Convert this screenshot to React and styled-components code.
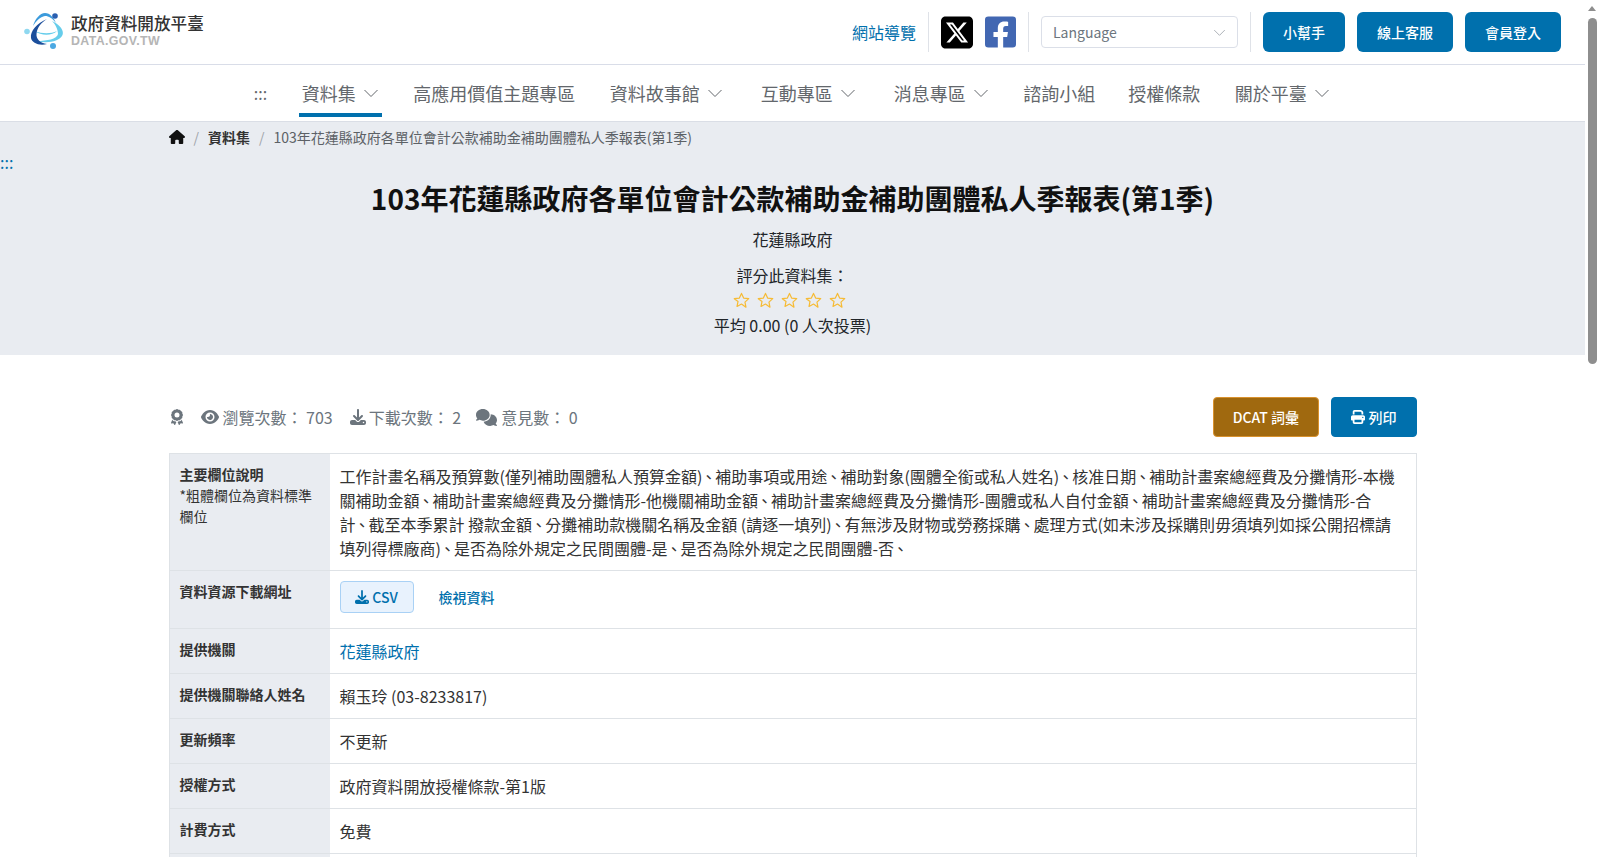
import React from "react";
import styled, { createGlobalStyle } from "styled-components";
import { FaFacebookSquare } from "react-icons/fa";
import { FaAward, FaEye, FaDownload, FaComments, FaPrint, FaHouse, FaSquareXTwitter } from "react-icons/fa6";

const Global = createGlobalStyle`
  html, body { margin: 0; padding: 0; background: #fff; }
  body { font-family: "Noto Sans CJK TC", "Noto Sans", sans-serif; font-size: 16px; line-height: 24px; color: #212529; }
  * { box-sizing: border-box; }
`;
const blue = "#0070ad";
const Page = styled.div`padding-right: 15px;`;
const ScrollTrack = styled.div`position: fixed; top: 0; right: 0; bottom: 0; width: 15px; background: #fff;`;
const ScrollArrow = styled.div`
  position: absolute; left: 3px; top: 6px; width: 0; height: 0;
  border-left: 4.5px solid transparent; border-right: 4.5px solid transparent; border-bottom: 5px solid #8e8e8e;
`;
const ScrollThumb = styled.div`position: absolute; left: 3px; top: 18px; width: 9px; height: 346px; border-radius: 5px; background: #8e8e8e;`;
const Header = styled.header`
  height: 65px; display: flex; align-items: center; justify-content: space-between;
  padding: 0 24px; border-bottom: 1px solid #d9dde8;
`;
const Logo = styled.div`display: flex; align-items: center; gap: 7px;`;
const LogoText = styled.div`display: flex; flex-direction: column; margin-top: -3px;`;
const LogoTitle = styled.span`font-size: 16.6px; line-height: 20px; font-weight: 500; color: #333;`;
const LogoSub = styled.span`font-family: "Liberation Sans", sans-serif; font-size: 12.4px; line-height: 14px; font-weight: 700; letter-spacing: 0.35px; color: #b5b5b5; margin-top: 1px;`;
const Tools = styled.div`display: flex; align-items: center; gap: 12px;`;
const SiteMap = styled.a`color: ${blue}; font-size: 16px;`;
const Sep = styled.span`width: 1px; height: 40px; background: #dfe2e8;`;
const Social = styled.span`display: flex; font-size: ${p => p.$size}px; color: ${p => p.$color}; width: ${p => p.$w}px; justify-content: center; align-items: center; height: 32px;`;
const LangSelect = styled.div`
  width: 197px; height: 32px; border: 1px solid #dbdfe8; border-radius: 4px; padding: 0 11px;
  display: flex; align-items: center; justify-content: space-between; font-size: 14px; color: #6c757d;
`;
const HeadBtn = styled.button`
  height: 40px; padding: 0 20px; background: ${blue}; border: 0; border-radius: 6px; color: #fff;
  font: 500 14px "Noto Sans CJK TC", sans-serif;
`;
const Nav = styled.nav`
  height: 57px; display: flex; justify-content: center; gap: 25px; border-bottom: 1px solid #dadee6; padding-left: 2px;
`;
const NavItem = styled.a`
  display: flex; align-items: center; gap: 7px; padding: 0 3px; height: 56px; position: relative;
  font-size: ${p => p.$small ? 16 : 18}px; color: #63676c;
  margin: 0 ${p => p.$drop ? 3.5 : 0}px 0 ${p => p.$drop ? 3.5 : p.$ml || 0}px;
  ${p => p.$active && `&::after { content: ""; position: absolute; left: 0; right: 0; bottom: 4px; height: 4px; background: ${blue}; }`}
`;
const Band = styled.section`background: #e9ecf1; height: 233px; position: relative;`;
const Container = styled.div`width: 1248px; margin: 0 auto;`;
const Crumbs = styled.div`display: flex; align-items: center; height: 30px; font-size: 14px; color: #5c6166;`;
const HomeIcon = styled.span`display: flex; color: #111; font-size: 16px;`;
const Slash = styled.span`color: #a0a4aa; margin: 0 9px;`;
const CrumbBold = styled.b`font-weight: 700; color: #333;`;
const Anchor = styled.a`position: absolute; left: 0; top: 28px; color: ${blue}; font-size: 16px; line-height: 24px;`;
const Title = styled.h1`margin: 0; padding-top: 25px; text-align: center; font-size: 28px; line-height: 42px; font-weight: 700; color: #111;`;
const Center = styled.div`text-align: center; margin-top: ${p => p.$mt || 0}px; color: #212529;`;
const Stars = styled.div`display: flex; justify-content: center; gap: 7px; height: 24px; margin-top: 1px; padding-right: 6px; align-items: center;`;
const Main = styled.main`padding-top: 42px;`;
const StatRow = styled.div`display: flex; align-items: center; justify-content: space-between; height: 40px; margin-bottom: 16px;`;
const Stats = styled.div`display: flex; align-items: center; color: #6c757d; font-size: 16px;`;
const Stat = styled.span`display: flex; align-items: center; gap: ${p => p.$gap || 4}px; margin-left: ${p => p.$ml || 0}px; white-space: pre;`;
const Actions = styled.div`display: flex; gap: 12px;`;
const ActionBtn = styled.button`
  height: 40px; padding: 0 ${p => p.$px}px; border-radius: 4px; color: #fff; display: flex; align-items: center; gap: 4px;
  background: ${p => p.$bg}; border: 1px solid ${p => p.$bd};
  font: 500 14px "Noto Sans CJK TC", sans-serif;
`;
const Table = styled.div`border: 1px solid #dee2e6; border-bottom: 0;`;
const Row = styled.div`display: grid; grid-template-columns: 160px 1fr; border-bottom: 1px solid #dee2e6;`;
const Label = styled.div`background: #e9ecf1; padding: 10px; font-size: 14px; line-height: 21px; color: #333;`;
const LabelBold = styled.b`font-weight: 700; display: block; color: #333;`;
const Value = styled.div`padding: ${p => p.$pad || "10px"}; font-size: 16px; line-height: 24px; color: #333; display: flex; align-items: ${p => p.$pad ? "center" : "flex-start"};`;
const DescBlock = styled.div`display: flex; flex-direction: column;`;
const DescLine = styled.div`white-space: pre;`;
const Dun = styled.span`font-feature-settings: "palt"; margin: 0 2.5px;`;
const LinkText = styled.a`color: ${blue};`;
const CsvBtn = styled.a`
  height: 32px; width: 74px; display: flex; align-items: center; justify-content: center; gap: 3px;
  background: #e8f2fd; border: 1px solid #a9d1f5; border-radius: 4px; color: ${blue}; font-size: 14px; font-weight: 500;
`;
const ViewLink = styled.a`color: ${blue}; font-size: 14px; font-weight: 500; margin-left: 25px;`;
const Footer = styled.footer`margin-top: 40px; height: 800px; background: #e9ecf1;`;
const Chev = ({ size = 16, color = "currentColor" }) => (
  <svg width={size} height={size} viewBox="0 0 16 16" fill="none" stroke={color} strokeWidth="1"><path d="M1.5 5l6.5 6.5L14.5 5" /></svg>
);
const LogoMark = () => (
  <svg width="40" height="40" viewBox="0 0 40 40">
    <path d="M9 14C11 7 16 1 21 1C26 1 30 6 32 11C28 6 25 4 21 4C16 5 12 9 9 14Z" fill="#3c9bdc" />
    <path d="M28 9C36 13 41 19 38 24C35 29 24 32 13 29C23 29 33 27 34 22C34 17 31 12 28 9Z" fill="#66cdeb" />
    <path d="M11 19C18 22 27 22 33 19C28 24 17 24 11 19Z" fill="#66cdeb" />
    <path d="M23 7C13 11 6 19 7 26C8 31 15 34 23 32C16 31 12 27 12.5 22C13 15 18 10 23 7Z" fill="#1c4f9c" />
    <circle cx="31" cy="4" r="2.8" fill="#2a5fb0" />
    <circle cx="3" cy="19.5" r="2.8" fill="#8fd8f0" />
    <circle cx="29" cy="34" r="3" fill="#4ba8e2" />
  </svg>
);
const Star = () => (
  <svg width="17" height="17" viewBox="0 0 24 24" fill="none" stroke="#f6bb35" strokeWidth="1.7" strokeLinejoin="round"><path d="M12 2l3 6.6 7.2.8-5.3 4.9 1.4 7.1L12 17l-6.3 3.4 1.4-7.1L1.8 9.4 9 8.6z" /></svg>
);
const descLines = [
  "工作計畫名稱及預算數(僅列補助團體私人預算金額)、補助事項或用途、補助對象(團體全銜或私人姓名)、核准日期、補助計畫案總經費及分攤情形-本機",
  "關補助金額、補助計畫案總經費及分攤情形-他機關補助金額、補助計畫案總經費及分攤情形-團體或私人自付金額、補助計畫案總經費及分攤情形-合",
  "計、截至本季累計 撥款金額、分攤補助款機關名稱及金額 (請逐一填列)、有無涉及財物或勞務採購、處理方式(如未涉及採購則毋須填列如採公開招標請",
  "填列得標廠商)、是否為除外規定之民間團體-是、是否為除外規定之民間團體-否、",
];
const rows = [
  ["提供機關聯絡人姓名", "賴玉玲 (03-8233817)"],
  ["更新頻率", "不更新"],
  ["授權方式", "政府資料開放授權條款-第1版"],
  ["計費方式", "免費"],
  ["編碼格式", "UTF-8"],
  ["資料集類型", "原始資料"],
];
const renderLine = line => line.split("、").map((part, i, all) => (
  <React.Fragment key={i}>{part}{i < all.length - 1 && <Dun>、</Dun>}</React.Fragment>
));
export default function App() {
  return (
    <Page lang="zh-Hant">
      <Global />
      <Header>
        <Logo>
          <LogoMark />
          <LogoText>
            <LogoTitle>政府資料開放平臺</LogoTitle>
            <LogoSub>DATA.GOV.TW</LogoSub>
          </LogoText>
        </Logo>
        <Tools>
          <SiteMap>網站導覽</SiteMap>
          <Sep />
          <Social $size={37} $w={32} $color="#000"><FaSquareXTwitter /></Social>
          <Social $size={36} $w={31} $color="#4267b2"><FaFacebookSquare /></Social>
          <Sep />
          <LangSelect>Language<Chev size={13} color="#9aa0a8" /></LangSelect>
          <Sep />
          <HeadBtn>小幫手</HeadBtn>
          <HeadBtn>線上客服</HeadBtn>
          <HeadBtn>會員登入</HeadBtn>
        </Tools>
      </Header>
      <Nav>
        <NavItem $small>:::</NavItem>
        <NavItem $drop $active>資料集<Chev /></NavItem>
        <NavItem>高應用價值主題專區</NavItem>
        <NavItem $drop>資料故事館<Chev /></NavItem>
        <NavItem $drop>互動專區<Chev /></NavItem>
        <NavItem $drop>消息專區<Chev /></NavItem>
        <NavItem>諮詢小組</NavItem>
        <NavItem $ml={2}>授權條款</NavItem>
        <NavItem $drop>關於平臺<Chev /></NavItem>
      </Nav>
      <Band>
        <Anchor>:::</Anchor>
        <Container>
          <Crumbs>
            <HomeIcon><FaHouse /></HomeIcon>
            <Slash>/</Slash>
            <CrumbBold>資料集</CrumbBold>
            <Slash>/</Slash>
            103年花蓮縣政府各單位會計公款補助金補助團體私人季報表(第1季)
          </Crumbs>
          <Title>103年花蓮縣政府各單位會計公款補助金補助團體私人季報表(第1季)</Title>
          <Center $mt={8}>花蓮縣政府</Center>
          <Center $mt={12}>評分此資料集：</Center>
          <Stars>{[0, 1, 2, 3, 4].map(i => <Star key={i} />)}</Stars>
          <Center $mt={1}>平均 0.00 (0 人次投票)</Center>
        </Container>
      </Band>
      <Main>
        <Container>
          <StatRow>
            <Stats>
              <Stat><FaAward size={16} /></Stat>
              <Stat $ml={16}><FaEye size={18} />瀏覽次數： 703</Stat>
              <Stat $ml={17} $gap={3}><FaDownload size={16} />下載次數： 2</Stat>
              <Stat $ml={15}><FaComments size={21} />意見數： 0</Stat>
            </Stats>
            <Actions>
              <ActionBtn $px={18.5} $bg="#a0690f" $bd="#d9922e">DCAT 詞彙</ActionBtn>
              <ActionBtn $px={19} $bg={blue} $bd={blue}><FaPrint size={14} />列印</ActionBtn>
            </Actions>
          </StatRow>
          <Table>
            <Row>
              <Label><LabelBold>主要欄位說明</LabelBold>*粗體欄位為資料標準欄位</Label>
              <Value>
                <DescBlock>{descLines.map(l => <DescLine key={l}>{renderLine(l)}</DescLine>)}</DescBlock>
              </Value>
            </Row>
            <Row>
              <Label><LabelBold>資料資源下載網址</LabelBold></Label>
              <Value $pad="10px 10px 15px">
                <CsvBtn><FaDownload size={14} />CSV</CsvBtn>
                <ViewLink>檢視資料</ViewLink>
              </Value>
            </Row>
            <Row>
              <Label><LabelBold>提供機關</LabelBold></Label>
              <Value><LinkText>花蓮縣政府</LinkText></Value>
            </Row>
            {rows.map(([a, b]) => (
              <Row key={a}>
                <Label><LabelBold>{a}</LabelBold></Label>
                <Value>{b}</Value>
              </Row>
            ))}
          </Table>
        </Container>
        <Footer />
      </Main>
      <ScrollTrack>
        <ScrollArrow />
        <ScrollThumb />
      </ScrollTrack>
    </Page>
  );
}
